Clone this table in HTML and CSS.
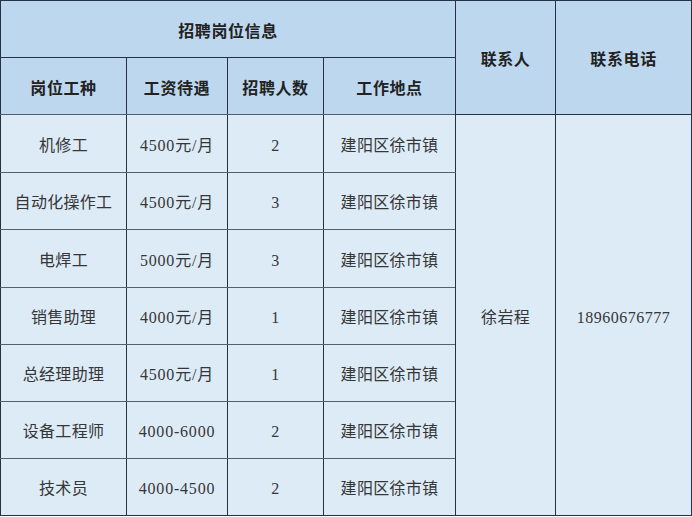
FILE: index.html
```html
<!DOCTYPE html>
<html lang="zh-CN">
<head>
<meta charset="utf-8">
<title>招聘岗位信息</title>
<link rel="stylesheet" href="styles.css">
</head>
<body>
<table class="jobs">
  <colgroup>
    <col class="c1"><col class="c2"><col class="c3"><col class="c4"><col class="c5"><col class="c6">
  </colgroup>
  <thead>
    <tr class="h1">
      <th colspan="4" class="title">招聘岗位信息</th>
      <th rowspan="2">联系人</th>
      <th rowspan="2">联系电话</th>
    </tr>
    <tr class="h2">
      <th>岗位工种</th>
      <th>工资待遇</th>
      <th>招聘人数</th>
      <th>工作地点</th>
    </tr>
  </thead>
  <tbody>
    <tr class="r58">
      <td>机修工</td><td class="num">4500元/月</td><td>2</td><td>建阳区徐市镇</td>
      <td rowspan="7" class="contact">徐岩程</td>
      <td rowspan="7" class="contact num">18960676777</td>
    </tr>
    <tr class="r57"><td>自动化操作工</td><td class="num">4500元/月</td><td>3</td><td>建阳区徐市镇</td></tr>
    <tr class="r58"><td>电焊工</td><td class="num">5000元/月</td><td>3</td><td>建阳区徐市镇</td></tr>
    <tr class="r57"><td>销售助理</td><td class="num">4000元/月</td><td>1</td><td>建阳区徐市镇</td></tr>
    <tr class="r57"><td>总经理助理</td><td class="num">4500元/月</td><td>1</td><td>建阳区徐市镇</td></tr>
    <tr class="r57"><td>设备工程师</td><td class="num">4000-6000</td><td>2</td><td>建阳区徐市镇</td></tr>
    <tr class="r57 last"><td>技术员</td><td class="num">4000-4500</td><td>2</td><td>建阳区徐市镇</td></tr>
  </tbody>
</table>
</body>
</html>
```

FILE: styles.css
```css
html, body {
  margin: 0;
  padding: 0;
  background: #ffffff;
}

.jobs {
  border-collapse: collapse;
  table-layout: fixed;
  width: 691px;
  font-family: "Liberation Serif", "Noto Sans CJK SC", serif;
  font-size: 16px;
}

.c1 { width: 126px; }
.c2 { width: 101px; }
.c3 { width: 96px; }
.c4 { width: 132px; }
.c5 { width: 100px; }
.c6 { width: 136px; }

.jobs th,
.jobs td {
  border: 1px solid #243243;
  padding: 0;
  text-align: center;
  vertical-align: middle;
  line-height: 20px;
}

.jobs th {
  background: #bdd7ee;
  color: #222222;
  font-family: "Noto Sans CJK SC", sans-serif;
  font-weight: 700;
  font-size: 16px;
  letter-spacing: 0.6px;
  padding-top: 1px;
}

.jobs .h1 { height: 57px; }
.jobs .h2 { height: 57px; }
.jobs .h2 th { border-bottom-color: #4f5d6c; padding-top: 2px; }

.jobs td {
  background: #ddebf7;
  color: #363636;
  border-bottom-color: #55616e;
  font-weight: 400;
  padding-top: 4px;
  letter-spacing: 0.3px;
}

.jobs td.num { letter-spacing: 0.8px; }

.jobs td.contact {
  border-bottom-color: #243243;
  padding-top: 5px;
}

.jobs td.contact.num { letter-spacing: 0.5px; }

.jobs .last td { border-bottom-color: #243243; }

.jobs .r58 { height: 58px; }
.jobs .r57 { height: 57px; }
```
